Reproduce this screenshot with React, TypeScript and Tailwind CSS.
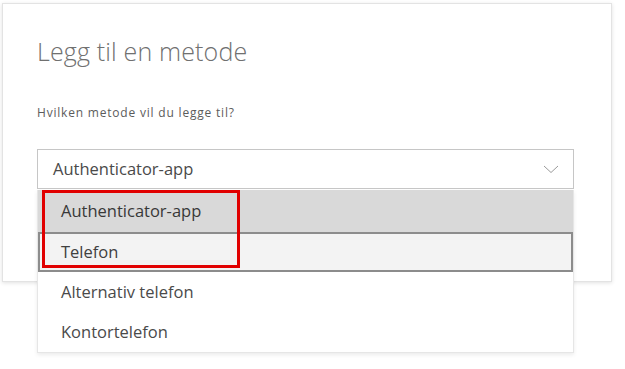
import React from "react";

const options = ["Authenticator-app", "Telefon", "Alternativ telefon", "Kontortelefon"];

function Chevron() {
  return (
    <svg width="16" height="9" viewBox="0 0 16 9" fill="none">
      <path d="M1 1l7 6.5L15 1" stroke="#9a9a9a" strokeWidth="1" />
    </svg>
  );
}

export default function App() {
  return (
    <div className="relative w-[625px] h-[369px] bg-white overflow-hidden font-['Open_Sans',sans-serif]">
      <div className="ml-[2px] mt-[3px] w-[610px] h-[279px] border border-[#e3e3e3] shadow-[0_1px_4px_rgba(0,0,0,0.12)] pl-[34px] pr-[37px] pt-[29px]">
        <h1 className="text-[25px] leading-[36px] font-light text-[#707070] tracking-[0.15px]">
          Legg til en metode
        </h1>
        <p className="mt-[36px] text-[12px] leading-[16px] text-[#5c5c5c] tracking-[0.8px]">
          Hvilken metode vil du legge til?
        </p>
        <div className="mt-[28px] h-[40px] border border-[#c6c6c6] flex items-center justify-between pl-[15px] pr-[14px]">
          <span className="text-[16.5px] text-[#4a4a4a]">Authenticator-app</span>
          <Chevron />
        </div>
      </div>

      <div className="absolute left-[37px] top-[190px] w-[537px] bg-white border-x border-b border-[#e6e6e6] shadow-[0_2px_4px_rgba(0,0,0,0.08)] text-[16.5px] text-[#4a4a4a]">
        <div className="h-[42px] bg-[#d9d9d9] flex items-center pl-[23px] text-[#383838]">{options[0]}</div>
        <div className="h-[40px] bg-[#f3f3f3] border-2 border-[#8c8c8c] flex items-center pl-[21px] text-[#404040]">{options[1]}</div>
        <div className="h-[40px] flex items-center pl-[23px]">{options[2]}</div>
        <div className="h-[40px] flex items-center pl-[23px]">{options[3]}</div>
      </div>

      <div className="absolute left-[42px] top-[190px] w-[198px] h-[78px] border-[3px] border-[#e10000]" />
    </div>
  );
}
